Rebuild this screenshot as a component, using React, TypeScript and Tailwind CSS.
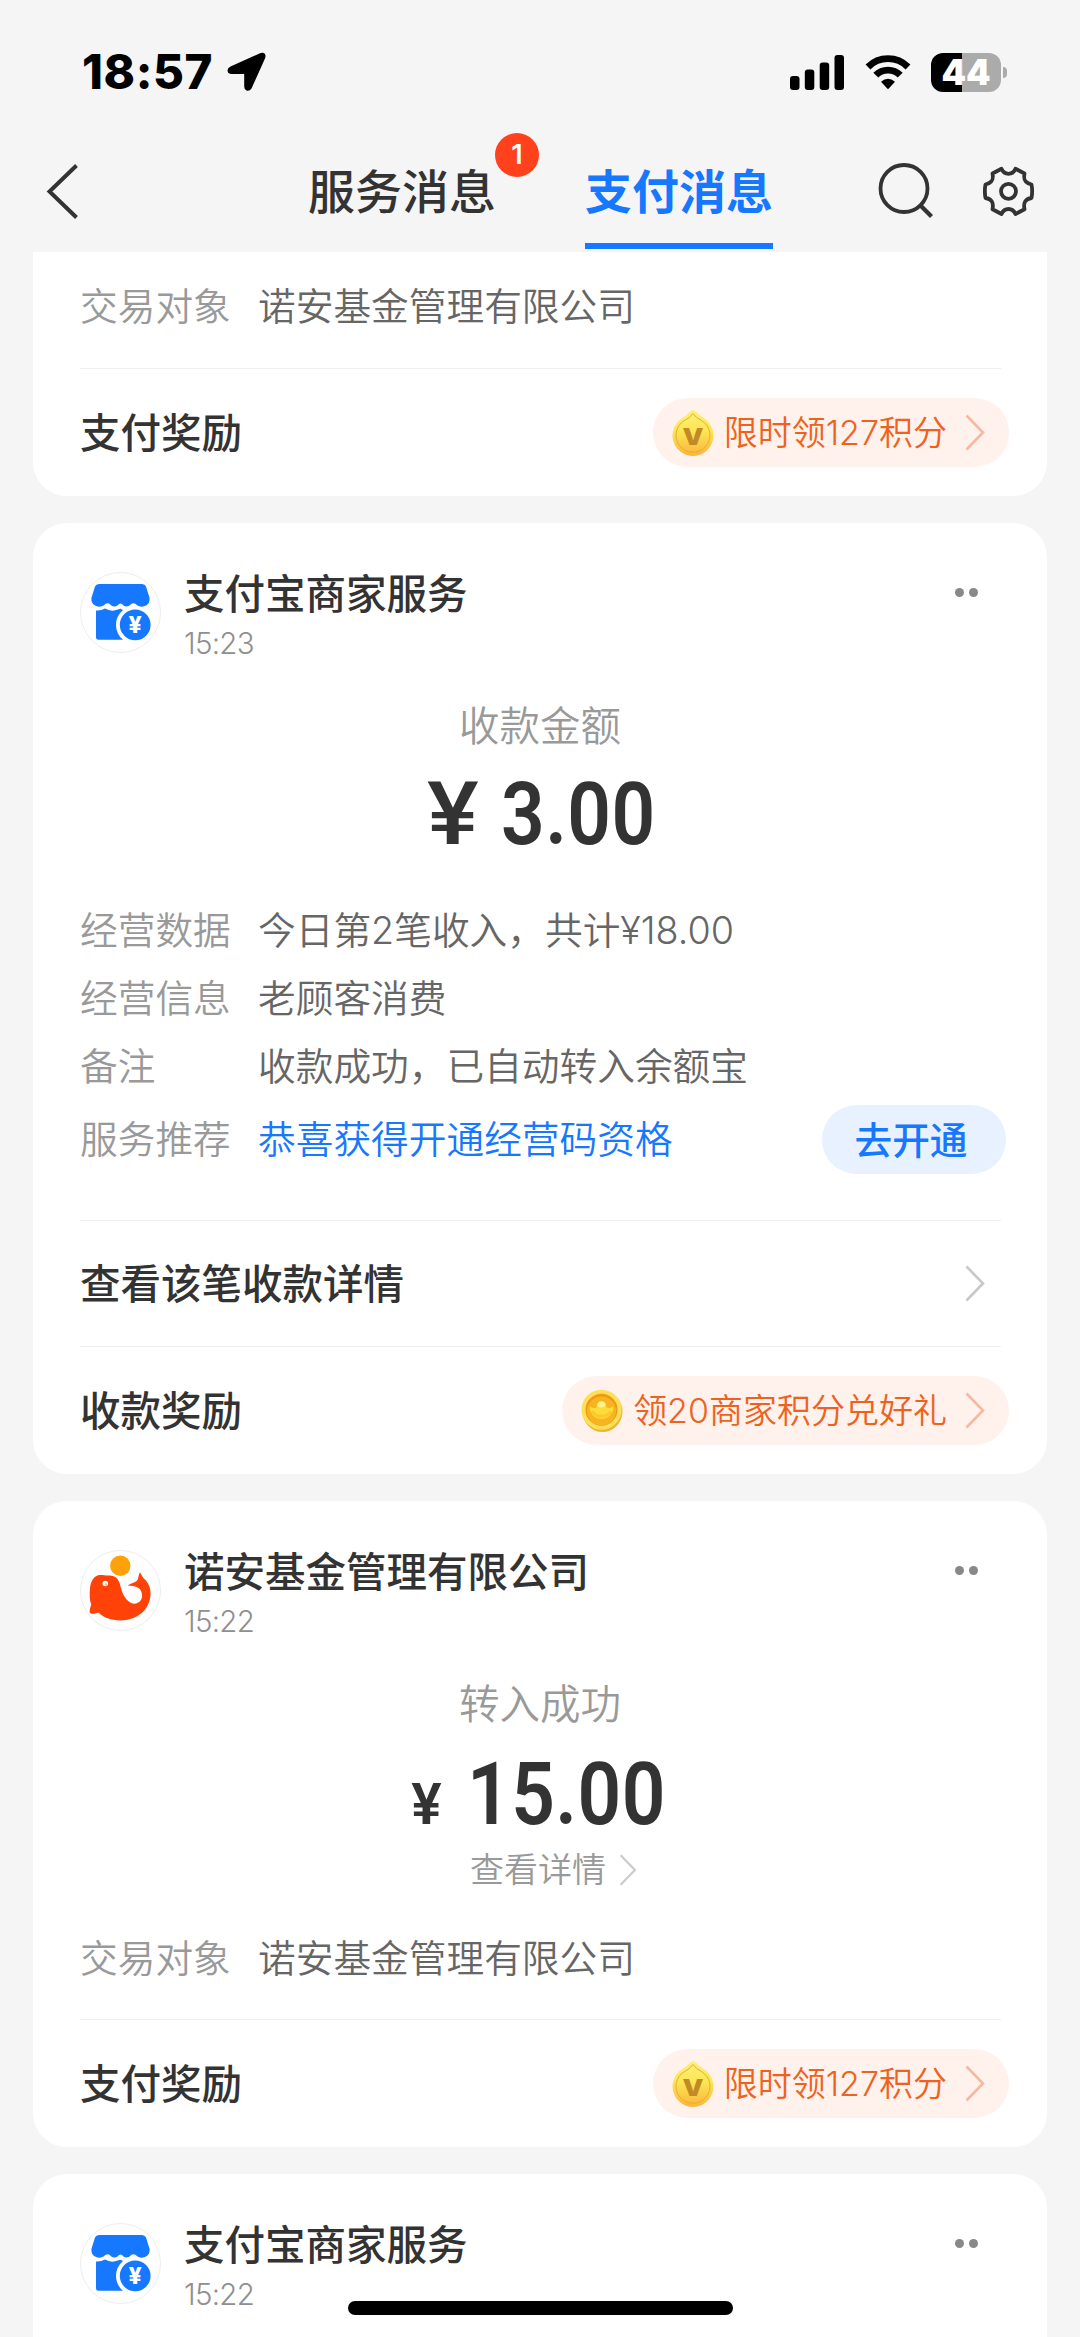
import type { ReactNode } from "react";

function ShopLogo() {
  return (
    <svg width="81" height="81" viewBox="0 0 81 81" className="shrink-0">
      <circle cx="40.5" cy="40.5" r="40" fill="#fff" stroke="#ededed" strokeWidth="1" />
      <path
        d="M19 12H62Q65 12 66 14.5L69.6 26Q70 32 65 34Q60.500 35.500 57.500 33.500Q54.500 30.500 52 31.500Q47.500 36 43.500 33.500Q40.500 29.500 37.500 33.500Q33 36 29 31.500Q26.500 30.500 23.500 33.500Q20.500 35.500 16 34Q11 32 11.400 26L15 14.500Q16 12 19 12Z"
        fill="#1677ff"
      />
      <path
        d="M16 38.5Q21 39 25 36.600Q31 40 36 38Q39 37 40.500 36.800L43 38Q36 44 36 53Q36 62 43 67.800H18.500Q16 67.800 16 65.500Z"
        fill="#1677ff"
      />
      <circle cx="55.200" cy="52.800" r="15.400" fill="#1677ff" />
      <text x="55.200" y="61" textAnchor="middle" fontSize="23" fontWeight="800" fill="#fff" fontFamily="Inter, sans-serif">
        ¥
      </text>
    </svg>
  );
}

function WhaleLogo() {
  return (
    <svg width="81" height="81" viewBox="0 0 81 81" className="shrink-0">
      <circle cx="40.5" cy="40.5" r="40" fill="#fff" stroke="#ededed" strokeWidth="1" />
      <circle cx="40.300" cy="15.700" r="10.200" fill="#ffa20a" />
      <path
        d="M19 25C23 24.500 26 26 30 25.500C38 26 39.500 32 41 38C43 47 49 54 55 53.700C60 53 62.500 49 62 44.500C61.500 39 58 35.800 47.500 35.500C51 33 56.500 32.500 58 29C58.500 26.500 59 23.500 60 22.200C61.500 25 63 28 65.500 30C69 34 70.600 38 70.600 44C70 60 57 70.400 40.500 70.400C31 70.400 23 67.500 18.500 62.500C15 64 10.500 64.500 9.800 62.500C9.200 60 10.500 57.500 11.200 54.500C9.500 50 9.500 45 9.900 39C10.500 32 13 26.500 19 25Z"
        fill="#ff4208"
      />
      <circle cx="25.300" cy="33.500" r="2.800" fill="#fff" />
      <circle cx="26" cy="34.500" r="1.200" fill="#ffb59c" />
    </svg>
  );
}

function DropCoin() {
  return (
    <svg width="42" height="48" viewBox="0 0 42 48" className="shrink-0">
      <defs>
        <linearGradient id="drop" x1="0" y1="0" x2="0" y2="1">
          <stop offset="0" stopColor="#fdf07a" />
          <stop offset="0.450" stopColor="#fce655" />
          <stop offset="1" stopColor="#fbb43c" />
        </linearGradient>
      </defs>
      <path d="M21 1Q23 1 25 3.500Q27.500 6.500 31 8.500A20.500 20.500 0 1 1 11 8.500Q14.500 6.500 17 3.500Q19 1 21 1Z" fill="url(#drop)" />
      <path d="M21 4.500Q24 9 29.500 11.500A17 17 0 1 1 12.500 11.500Q18 9 21 4.500Z" fill="none" stroke="#e3b02e" strokeWidth="1" />
      <text x="10.500" y="36" fontSize="22.500" fontWeight="900" fill="#c08a25" fontFamily="Inter, sans-serif" textLength="21" lengthAdjust="spacingAndGlyphs">
        V
      </text>
    </svg>
  );
}

function IngotCoin() {
  return (
    <svg width="42" height="43" viewBox="0 0 42 43" className="shrink-0">
      <ellipse cx="21.500" cy="22.500" rx="20" ry="20.500" fill="#eab731" />
      <circle cx="20.500" cy="20.700" r="20" fill="#fde057" />
      <circle cx="20.500" cy="20.700" r="16" fill="#f09a12" />
      <circle cx="20.500" cy="22" r="14.500" fill="#f8b320" />
      <path d="M9.500 17.500Q12 20 15.500 18.500Q16 12 20.500 12Q25 12 25.500 18.500Q29 20 31.500 17.500Q33.500 19 31 23.500Q28 30 20.500 30Q13 30 10 23.500Q7.500 19 9.500 17.500Z" fill="#fddb3a" />
      <path d="M11 22.500Q15 27.500 20.500 27.300Q26 27.500 30 22.500" fill="none" stroke="#fdc927" strokeWidth="3" />
      <ellipse cx="20.500" cy="15.500" rx="4" ry="3" fill="#fff08a" />
    </svg>
  );
}

function Chevron({ color, size = "lg" }: { color: string; size?: "lg" | "sm" }) {
  return (
    <svg width={size === "lg" ? 20 : 18} height={size === "lg" ? 37 : 32} viewBox="0 0 20 37" className="shrink-0">
      <path d="M1.500 1.500L18 18.500L1.500 35.500" fill="none" stroke={color} strokeWidth="2.600" />
    </svg>
  );
}

function StatusBar() {
  return (
    <div className="flex h-[144px] items-center pl-[82px]">
      <span className="h-[60px] w-[136px] text-[47.500px] leading-[60px] font-extrabold tracking-[0.600px] whitespace-nowrap text-black">18:57</span>
      <svg width="39" height="40" viewBox="0 0 39 40" className="ml-[9px]">
        <path d="M36 0.800Q39.500 1.500 38.200 6L24.500 36.500Q22.500 39.500 19.500 38.500Q17.200 37.500 17.200 34.500V22H4Q0.500 21.500 0.500 18.500Q0.500 16 3.500 14.500L33 1.200Q34.500 0.500 36 0.800Z" />
      </svg>
      <svg width="54" height="35" viewBox="0 0 54 35" className="ml-[524px]">
        <rect x="0" y="21" width="9.500" height="14" rx="3" />
        <rect x="14.800" y="14.500" width="9.500" height="20.500" rx="3" />
        <rect x="29.700" y="7.500" width="9.500" height="27.500" rx="3" />
        <rect x="44.500" y="0" width="9.500" height="35" rx="3" />
      </svg>
      <svg width="46" height="36" viewBox="0 0 46 36" className="ml-[21px]">
        <path d="M3 13A28.300 28.300 0 0 1 43 13" fill="none" stroke="#000" strokeWidth="6.800" />
        <path d="M10.800 21.200A17 17 0 0 1 35.200 21.200" fill="none" stroke="#000" strokeWidth="6.800" />
        <path d="M16 27.800Q23 21.500 30 27.800L24 34.300Q23 35.500 22 34.300Z" />
      </svg>
      <div className="ml-[20px] flex items-center gap-[2px]">
        <div className="flex h-[39px] w-[70px] items-center justify-center rounded-[12px] bg-linear-to-r from-black from-[44%] to-[#ababab] to-[44%] text-[35px] leading-[39px] font-black text-white">
          44
        </div>
        <div className="h-[11px] w-[4px] rounded-r-full bg-[#ababab]" />
      </div>
    </div>
  );
}

function NavBar() {
  return (
    <div className="flex h-[108px] items-start pl-[46px] text-[47px] leading-[94px]">
      <svg width="32" height="94" viewBox="0 0 32 94">
        <path d="M30.500 21.500L3.500 47.500L30.500 73.500" fill="none" stroke="#333" strokeWidth="4" />
      </svg>
      <div className="relative ml-[230px] pt-px font-medium whitespace-nowrap text-[#333]">
        服务消息
        <span className="absolute top-[-11px] left-[187px] h-[44px] w-[44px] rounded-full bg-[#ff411c] text-center text-[27px] leading-[44px] font-semibold text-white">
          1
        </span>
      </div>
      <div className="ml-[89px] flex flex-col pt-px font-bold whitespace-nowrap text-[#1677ff]">
        支付消息
        <span className="mt-[4px] h-[6px] w-full bg-[#1677ff]" />
      </div>
      <svg width="56" height="94" viewBox="0 0 56 94" className="ml-[105px]">
        <circle cx="26" cy="44.500" r="23.500" fill="none" stroke="#333" strokeWidth="3.800" />
        <path d="M42 61L53.500 72.500" stroke="#333" strokeWidth="4.200" />
      </svg>
      <svg width="52" height="94" viewBox="0 -22 52 94" className="ml-[49px]">
        <path
          d="M18.500 2.800C20 6.500 22 7.800 25.500 7.800S31 6.500 32.500 2.800L41.500 7.500C40.200 14 42 17 48.500 18.500Q49.800 25 48.500 32C42 33 40.200 37 41.500 43.200L32.500 48C31 44.500 29 43 25.500 43S20 44.500 18.500 48L9.500 43.200C10.800 37 9 33 2.500 32Q1.200 25 2.500 18.500C9 17 10.800 14 9.500 7.500Z"
          fill="none"
          stroke="#333"
          strokeWidth="3.800"
          strokeLinejoin="round"
        />
        <circle cx="25.500" cy="25.300" r="7.500" fill="none" stroke="#333" strokeWidth="3.800" />
      </svg>
    </div>
  );
}

function Card({ children, flat = false }: { children: ReactNode; flat?: boolean }) {
  return (
    <section className={flat ? "flex flex-col rounded-b-[34px] bg-white px-[47px]" : "flex flex-col rounded-[34px] bg-white px-[47px]"}>
      {children}
    </section>
  );
}

function CardHeader({ logo, name, time }: { logo: ReactNode; name: string; time: string }) {
  return (
    <header className="flex h-[140px] items-start pt-[49px]">
      {logo}
      <div className="ml-[23px] flex flex-1 flex-col">
        <h2 className="h-[46px] text-[40.500px] leading-[46px] font-medium text-[#333]">{name}</h2>
        <time className="mt-[5px] text-[29.500px] leading-[40px] font-light tracking-[-0.700px] text-[#8f8f8f]">{time}</time>
      </div>
      <div className="mt-[16px] mr-[22px] flex gap-[5px]">
        <span className="size-[9px] rounded-full bg-[#888]" />
        <span className="size-[9px] rounded-full bg-[#888]" />
      </div>
    </header>
  );
}

function Amount({ yen, value }: { yen: ReactNode; value: string }) {
  return (
    <div className="flex h-[80px] items-baseline justify-center pl-[24px] font-['Roboto','Noto_Sans_CJK_SC',sans-serif] leading-[82px] font-semibold text-[#333]">
      {yen}
      <span className="inline-block origin-left scale-x-[0.880] text-[87px] tracking-[0.500px]">{value}</span>
    </div>
  );
}

function Row({ label, children }: { label: string; children: ReactNode }) {
  return (
    <div className="flex h-[68px] items-center text-[37.700px] leading-[69px] font-[350] whitespace-nowrap">
      <span className="w-[178px] text-[#999]">{label}</span>
      <span className="text-[#666]">{children}</span>
    </div>
  );
}

function Divider() {
  return <div className="h-px w-[921px] bg-[#eee]" />;
}

function Reward({ title, coin, text }: { title: string; coin: ReactNode; text: string }) {
  return (
    <div className="flex h-[127px] items-center justify-between">
      <span className="pt-[3px] text-[40.500px] leading-[60px] font-medium text-[#333]">{title}</span>
      <div className="mr-[-9px] flex h-[69px] items-center rounded-full bg-[#fff2ec] pr-[24px] pl-[19px]">
        {coin}
        <span className="mr-[18px] ml-[10px] text-[34px] leading-[70px] font-[350] whitespace-nowrap text-[#ee6220]">{text}</span>
        <Chevron color="#f6b9a0" />
      </div>
    </div>
  );
}

export default function App() {
  return (
    <main className="relative h-[2337px] w-[1080px] overflow-hidden bg-[#f5f5f5] font-['Inter','Noto_Sans_CJK_SC',sans-serif]">
      <StatusBar />
      <NavBar />
      <div className="flex flex-col gap-[27px] px-[33px]">
        <Card flat>
          <div className="pt-[20px] pb-[28px]">
            <Row label="交易对象">诺安基金管理有限公司</Row>
          </div>
          <Divider />
          <Reward title="支付奖励" coin={<DropCoin />} text="限时领127积分" />
        </Card>

        <Card>
          <CardHeader logo={<ShopLogo />} name="支付宝商家服务" time="15:23" />
          <p className="mt-[39px] text-center text-[40.500px] leading-[50px] font-[350] text-[#999]">收款金额</p>
          <div className="mt-[21px]">
            <Amount yen={<span className="mr-[28px] inline-block origin-left scale-x-[1.120] text-[87px] font-medium">¥</span>} value="3.00" />
          </div>
          <div className="mt-[43px]">
            <Row label="经营数据">今日第2笔收入，共计¥18.00</Row>
            <Row label="经营信息">老顾客消费</Row>
            <Row label="备注">收款成功，已自动转入余额宝</Row>
          </div>
          <div className="mt-[5px] mr-[-6px] mb-[46px] flex items-center justify-between">
            <Row label="服务推荐">
              <span className="text-[#1677ff]">恭喜获得开通经营码资格</span>
            </Row>
            <button className="h-[69px] w-[184px] rounded-full bg-[#e8f1ff] pr-[6px] text-[37.700px] leading-[68px] font-medium text-[#1677ff]">去开通</button>
          </div>
          <Divider />
          <div className="flex h-[125px] items-center justify-between pr-[15px]">
            <span className="pt-[2px] text-[40.500px] leading-[60px] font-medium text-[#333]">查看该笔收款详情</span>
            <Chevron color="#c8c8c8" />
          </div>
          <Divider />
          <Reward title="收款奖励" coin={<IngotCoin />} text="领20商家积分兑好礼" />
        </Card>

        <Card>
          <CardHeader logo={<WhaleLogo />} name="诺安基金管理有限公司" time="15:22" />
          <p className="mt-[39px] text-center text-[40.500px] leading-[50px] font-[350] text-[#999]">转入成功</p>
          <div className="mt-[23px]">
            <Amount yen={<span className="mr-[25px] text-[57px]">¥</span>} value="15.00" />
          </div>
          <div className="mt-[15px] mb-[32px] flex h-[44px] items-center justify-center gap-[13px] pl-[27px] text-[34px] leading-[46px] font-[350] text-[#999]">
            查看详情
            <Chevron color="#ccc" size="sm" />
          </div>
          <Row label="交易对象">诺安基金管理有限公司</Row>
          <div className="h-[27px]" />
          <Divider />
          <Reward title="支付奖励" coin={<DropCoin />} text="限时领127积分" />
        </Card>

        <Card>
          <CardHeader logo={<ShopLogo />} name="支付宝商家服务" time="15:22" />
          <div className="h-[200px]" />
        </Card>
      </div>
      <div className="absolute top-[2301px] left-[348px] h-[14px] w-[385px] rounded-full bg-black" />
    </main>
  );
}
